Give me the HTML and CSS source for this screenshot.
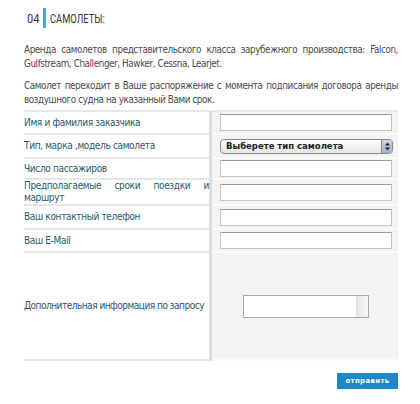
FILE: index.html
```html
<!DOCTYPE html>
<html lang="ru">
<head>
<meta charset="utf-8">
<title>Самолеты</title>
<link rel="stylesheet" href="styles.css">
</head>
<body>
<div class="page">
  <h2 class="title"><span class="num">04</span><span class="bar"></span><span class="name">САМОЛЕТЫ:</span></h2>
  <p class="text">Аренда самолетов представительского класса зарубежного производства: Falcon, Gulfstream, Challenger, Hawker, Cessna, Learjet.</p>
  <p class="text">Самолет переходит в Ваше распоряжение с момента подписания договора аренды воздушного судна на указанный Вами срок.</p>
  <table class="form">
    <colgroup><col class="c1"><col class="c2"></colgroup>
    <tr class="r1"><td class="lbl">Имя и фамилия заказчика</td><td class="fld"><div class="input"></div></td></tr>
    <tr class="r2"><td class="lbl">Тип, марка ,модель самолета</td><td class="fld"><div class="select"><span class="sel-text">Выберете тип самолета</span><span class="sel-arrow"><svg width="7" height="9" viewBox="0 0 7 9"><path d="M3.5 0.5 L6 3.5 H1 Z M3.5 8.5 L6 5.5 H1 Z" fill="#222"/></svg></span></div></td></tr>
    <tr class="r3"><td class="lbl">Число пассажиров</td><td class="fld"><div class="input"></div></td></tr>
    <tr class="r4"><td class="lbl just">Предполагаемые сроки поездки и маршрут</td><td class="fld"><div class="input"></div></td></tr>
    <tr class="r5"><td class="lbl">Ваш контактный телефон</td><td class="fld"><div class="input"></div></td></tr>
    <tr class="r6"><td class="lbl">Ваш E-Mail</td><td class="fld"><div class="input"></div></td></tr>
    <tr class="r7"><td class="lbl nowrap">Дополнительная информация по запросу</td><td class="fld"><div class="textarea"><span class="scroll"></span></div></td></tr>
  </table>
  <div class="actions"><span class="btn">отправить</span></div>
</div>
</body>
</html>
```
FILE: styles.css
```css
html, body { margin: 0; padding: 0; background: #fff; }
.page {
  width: 374px;
  padding: 8px 0 0 24px;
  font-family: "DejaVu Sans Condensed", "DejaVu Sans", Verdana, sans-serif;
}
.title {
  margin: 0;
  height: 20px;
  display: flex;
  align-items: center;
  font-family: Roboto, "Liberation Sans", sans-serif;
  font-weight: normal;
  font-size: 13px;
  color: #333;
}
.num { margin-left: 3px; display: inline-block; transform: scaleX(0.85); transform-origin: left center; }
.bar { width: 3px; height: 20px; background: #4fa6d9; margin: 0 4px 0 1px; }
.name { display: inline-block; transform: scaleX(0.72); transform-origin: left center; }
.text {
  margin: 15px 0 0 0;
  font-size: 9.8px;
  line-height: 14px;
  color: #4a4a4a;
  text-align: justify;
  letter-spacing: -0.4px;
}
.text + .text { margin-top: 8px; }
.form {
  margin-top: 3px;
  width: 374px;
  table-layout: fixed;
  border-collapse: separate;
  border-spacing: 0;
}
.c1 { width: 188px; }
.c2 { width: 186px; }
.form td { padding: 0; border-bottom: 2px solid #e6e6e6; vertical-align: middle; }
.r1 td { border-top: 2px solid #e6e6e6; }
.lbl {
  font-size: 10px;
  line-height: 12px;
  color: #1f5a66;
  border-right: 3px solid #dcdcdc;
  letter-spacing: -0.35px;
}
.nowrap { white-space: nowrap; letter-spacing: -0.5px; }
.just { text-align: justify; text-align-last: left; }
.fld { background: #f3f3f3; padding-left: 8px !important; border-bottom-color: #fafafa !important; }
.r1 td { height: 21px; }
.r2 td { height: 22px; }
.r3 td { height: 19px; }
.r4 td { height: 23px; }
.r5 td { height: 22px; }
.r6 td { height: 21px; }
.r7 td { height: 106px; }
.input {
  width: 170px;
  height: 15px;
  background: #fff;
  border: 1px solid #c4c4c4;
  border-top-color: #9a9a9a;
}
.select {
  width: 171px;
  height: 13px;
  border: 1px solid #8a8a8a;
  border-radius: 4px;
  background: linear-gradient(#fdfdfd, #e6e6e6);
  display: flex;
  align-items: center;
  justify-content: space-between;
}
.sel-text { font-family: "DejaVu Sans", sans-serif; font-size: 8.5px; font-weight: bold; color: #222; padding-left: 5px; }
.sel-arrow {
  width: 10px; height: 13px;
  background: linear-gradient(#c9d6e4, #9fb3c8);
  border-left: 1px solid #8a8a8a;
  border-radius: 0 3px 3px 0;
  display: flex; align-items: center; justify-content: center;
}
.textarea {
  width: 124px;
  height: 21px;
  margin-left: 23px;
  background: #fff;
  border: 1px solid #a8a8a8;
  display: flex;
  justify-content: flex-end;
}
.scroll { width: 11px; height: 21px; background: linear-gradient(90deg, #e6e6e6, #f8f8f8); border-left: 1px solid #ddd; }
.actions { display: flex; justify-content: flex-end; margin-top: 12px; }
.btn {
  width: 61px; height: 16px;
  background: #1e87c7;
  color: #fff;
  font-family: "DejaVu Sans", sans-serif;
  font-size: 7px;
  font-weight: bold;
  display: flex; align-items: center; justify-content: center;
  letter-spacing: 0.3px;
}
```
